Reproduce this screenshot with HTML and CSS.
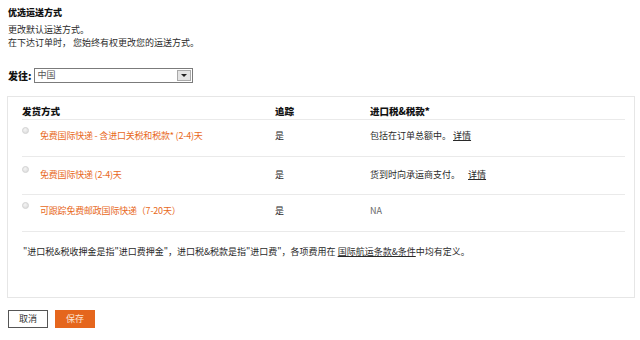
FILE: index.html
```html
<!DOCTYPE html>
<html lang="zh-CN">
<head>
<meta charset="utf-8">
<title>优选运送方式</title>
<link rel="stylesheet" href="styles.css">
</head>
<body>
<div class="page">
  <h1 class="title">优选运送方式</h1>
  <p class="intro">更改默认运送方式。<br>在下达订单时， 您始终有权更改您的运送方式。</p>

  <div class="dest">
    <span class="dest-label">发往:</span>
    <div class="select">
      <span class="select-value">中国</span>
      <span class="select-btn"><span class="caret"></span></span>
    </div>
  </div>

  <div class="panel">
    <table class="methods">
      <colgroup>
        <col class="c1"><col class="c2"><col class="c3">
      </colgroup>
      <thead>
        <tr><th>发货方式</th><th>追踪</th><th>进口税&amp;税款*</th></tr>
      </thead>
      <tbody>
        <tr>
          <td><div class="opt"><span class="radio"></span><span class="opt-name">免费国际快递 - 含进口关税和税款* (2-4)天</span></div></td>
          <td>是</td>
          <td>包括在订单总额中。 <a class="more">详情</a></td>
        </tr>
        <tr class="r2">
          <td><div class="opt"><span class="radio"></span><span class="opt-name">免费国际快递 (2-4)天</span></div></td>
          <td>是</td>
          <td>货到时向承运商支付。 <a class="more more-wide">详情</a></td>
        </tr>
        <tr>
          <td><div class="opt"><span class="radio"></span><span class="opt-name">可跟踪免费邮政国际快递（7-20天）</span></div></td>
          <td>是</td>
          <td class="na">NA</td>
        </tr>
      </tbody>
    </table>
    <p class="note">"进口税&amp;税收押金是指"进口费押金"，进口税&amp;税款是指"进口费"，各项费用在 <a class="terms">国际航运条款&amp;条件</a>中均有定义。</p>
  </div>

  <div class="actions">
    <button class="btn btn-cancel">取消</button>
    <button class="btn btn-save">保存</button>
  </div>
</div>
</body>
</html>
```

FILE: styles.css
```css
html, body {
  margin: 0;
  padding: 0;
  background: #fff;
}
body {
  font-family: "Noto Sans CJK SC", "Liberation Sans", sans-serif;
  font-size: 9px;
  color: #2a2a2a;
}
.page {
  padding: 7px 6px 0 8px;
}
.title {
  margin: 0;
  font-size: 9px;
  line-height: 12px;
  font-weight: 900;
  color: #111;
}
.intro {
  margin: 4px 0 0;
  line-height: 13px;
}
.dest {
  display: flex;
  align-items: center;
  margin-top: 19px;
  height: 14px;
}
.dest-label {
  font-weight: 900;
  font-size: 10px;
  color: #111;
  margin-right: 2px;
}
.select {
  display: flex;
  align-items: center;
  box-sizing: border-box;
  width: 159px;
  height: 15px;
  border: 1px solid #7b7b7b;
  background: #fff;
}
.select-value {
  flex: 1;
  padding-left: 3px;
  color: #555;
  line-height: 12px;
}
.select-btn {
  box-sizing: border-box;
  width: 14px;
  height: 11px;
  margin-right: 1px;
  background: #e4e4e4;
  border: 1px solid #a9a9a9;
  display: flex;
  align-items: center;
  justify-content: center;
}
.caret {
  width: 0;
  height: 0;
  border-left: 3px solid transparent;
  border-right: 3px solid transparent;
  border-top: 3px solid #222;
}
.panel {
  margin-top: 14px;
  box-sizing: border-box;
  width: 628px;
  height: 202px;
  margin-left: -1px;
  border: 1px solid #e6e6e6;
  padding: 6px 8px 0 14px;
}
.methods {
  width: 603px;
  border-collapse: collapse;
  table-layout: fixed;
}
.c1 { width: 253px; }
.c2 { width: 95px; }
.methods th {
  text-align: left;
  font-size: 9.5px;
  font-weight: 900;
  color: #111;
  height: 15px;
  line-height: 12px;
  padding: 0 0 1px;
  vertical-align: middle;
  border-bottom: 1px solid #eaeaea;
}
.methods td {
  vertical-align: top;
  padding: 10px 0 0;
  height: 26px;
  line-height: 12px;
  border-bottom: 1px solid #eaeaea;
}
.methods tr.r2 td {
  padding-top: 12px;
  height: 25px;
}
.opt {
  display: flex;
  align-items: flex-start;
}
.radio {
  box-sizing: border-box;
  width: 7px;
  height: 7px;
  border-radius: 50%;
  border: 1px solid #d4d4d4;
  background: radial-gradient(circle at 40% 35%, #f4f4f4, #d8d8d8);
  margin: -3px 0 0 0;
  flex: none;
}
.opt-name {
  margin-left: 11px;
  color: #e8691c;
  letter-spacing: -0.2px;
}
.more {
  color: #2a2a2a;
  text-decoration: underline;
}
.more-wide {
  margin-left: 6px;
}
.na {
  color: #666;
}
.note {
  margin: 14px 0 0 1px;
  line-height: 12px;
}
.terms {
  color: #2a2a2a;
  text-decoration: underline;
}
.actions {
  display: flex;
  gap: 7px;
  margin-top: 12px;
}
.btn {
  box-sizing: border-box;
  width: 40px;
  height: 18px;
  padding: 0;
  font-family: "Noto Sans CJK SC", "Liberation Sans", sans-serif;
  font-size: 9px;
  line-height: 14px;
  cursor: pointer;
}
.btn-cancel {
  background: #fff;
  color: #333;
  border: 1px solid #555;
}
.btn-save {
  background: #e5661d;
  color: #fbe3d2;
  border: 1px solid #e5661d;
}
```
